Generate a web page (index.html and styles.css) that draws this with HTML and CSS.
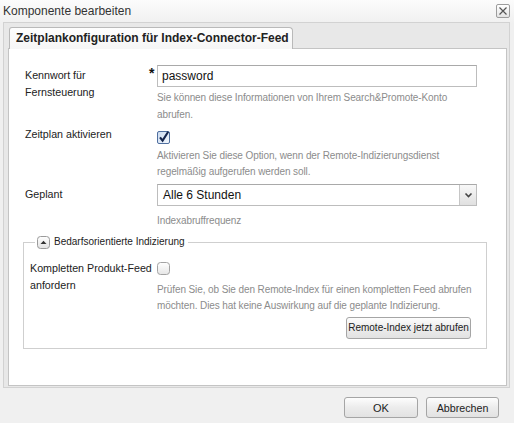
FILE: index.html
```html
<!DOCTYPE html>
<html lang="de">
<head>
<meta charset="utf-8">
<title>Komponente bearbeiten</title>
<link rel="stylesheet" href="styles.css">
</head>
<body>
<div class="dialog">
  <div class="titlebar">
    <span class="title">Komponente bearbeiten</span>
    <span class="close"><svg width="12" height="12" viewBox="0 0 12 12"><path d="M2.5 2.5 L9.5 9.5 M9.5 2.5 L2.5 9.5" stroke="#555" stroke-width="1.2" fill="none"/></svg></span>
  </div>
  <div class="panel">
    <div class="tabstrip"><div class="tab">Zeitplankonfiguration für Index-Connector-Feed</div></div>
    <div class="tabbody">
      <div class="row">
        <div class="label">Kennwort für<br>Fernsteuerung</div>
        <div class="req">*</div>
        <div class="control">
          <div class="input">password</div>
          <div class="help help-a"><span>Sie können diese Informationen von Ihrem Search&amp;Promote-Konto</span><span>abrufen.</span></div>
        </div>
      </div>
      <div class="row row-check">
        <div class="label">Zeitplan aktivieren</div>
        <div class="req"></div>
        <div class="control">
          <svg class="cb cb-on" width="13" height="13" viewBox="0 0 13 13"><defs><linearGradient id="cbg" x1="0" y1="0" x2="1" y2="1"><stop offset="0" stop-color="#c9daf0"/><stop offset="1" stop-color="#f4f8fd"/></linearGradient></defs><rect x="0.5" y="0.5" width="12" height="12" rx="1.5" fill="url(#cbg)" stroke="#4f6f9f"/><path d="M3 6.3 L5.6 9.6 L11.2 0.8" stroke="#14254d" stroke-width="2.1" fill="none"/></svg>
          <div class="help help-b"><span>Aktivieren Sie diese Option, wenn der Remote-Indizierungsdienst</span><span>regelmäßig aufgerufen werden soll.</span></div>
        </div>
      </div>
      <div class="row row-select">
        <div class="label">Geplant</div>
        <div class="req"></div>
        <div class="control">
          <div class="select"><span class="select-text">Alle 6 Stunden</span><span class="select-btn"><svg width="9" height="6" viewBox="0 0 9 6"><path d="M1.5 1.5 L4.5 4.5 L7.5 1.5" stroke="#444" stroke-width="1.6" fill="none"/></svg></span></div>
          <div class="help help-c"><span>Indexabruffrequenz</span></div>
        </div>
      </div>
      <fieldset class="group">
        <legend class="legend"><svg class="toggle" width="13" height="13" viewBox="0 0 13 13"><defs><linearGradient id="tg" x1="0" y1="0" x2="0" y2="1"><stop offset="0" stop-color="#ffffff"/><stop offset="1" stop-color="#e2e2e2"/></linearGradient></defs><rect x="0.5" y="0.5" width="12" height="12" rx="3" fill="url(#tg)" stroke="#9a9a9a"/><path d="M3.5 8 L6.5 4.8 L9.5 8 Z" fill="#333"/></svg><span>Bedarfsorientierte Indizierung</span></legend>
        <div class="row row-inner">
          <div class="label">Kompletten Produkt-Feed<br>anfordern</div>
          <div class="req"></div>
          <div class="control">
            <svg class="cb cb-off" width="13" height="13" viewBox="0 0 13 13"><defs><linearGradient id="cbo" x1="0" y1="0" x2="0" y2="1"><stop offset="0" stop-color="#ffffff"/><stop offset="1" stop-color="#e6e6e6"/></linearGradient></defs><rect x="0.5" y="0.5" width="12" height="12" rx="3" fill="url(#cbo)" stroke="#a3a3a3"/></svg>
            <div class="help help-d"><span>Prüfen Sie, ob Sie den Remote-Index für einen kompletten Feed abrufen</span><span>möchten. Dies hat keine Auswirkung auf die geplante Indizierung.</span></div>
            <div class="btn-row"><button class="btn btn-small">Remote-Index jetzt abrufen</button></div>
          </div>
        </div>
      </fieldset>
    </div>
  </div>
  <div class="footer">
    <button class="btn btn-ok">OK</button>
    <button class="btn btn-cancel">Abbrechen</button>
  </div>
</div>
</body>
</html>
```
FILE: styles.css
```css
* { box-sizing: border-box; }
html, body { margin: 0; padding: 0; }
body {
  width: 514px;
  height: 423px;
  overflow: hidden;
  background: #f0f0f0;
  font-family: "Liberation Sans", Arial, sans-serif;
  color: #222;
}
.dialog {
  width: 514px;
  height: 423px;
  display: flex;
  flex-direction: column;
  background: linear-gradient(#fcfcfc, #f0f0f0 24px, #f0f0f0);
}
.titlebar {
  height: 22px;
  display: flex;
  align-items: center;
  justify-content: space-between;
  padding: 0 4px 1px 3px;
}
.title { font-size: 12px; color: #333; line-height: 16px; }
.close {
  width: 14px;
  height: 14px;
  border: 1px solid #9c9c9c;
  border-radius: 2px;
  background: linear-gradient(#ffffff, #e4e4e4);
  display: flex;
  align-items: center;
  justify-content: center;
}
.panel {
  margin: 0 4px 0 3px;
  height: 366px;
  border: 1px solid #d2d2d2;
  background: #e8e8e8;
  padding: 4px 2px 1px 4px;
  display: flex;
  flex-direction: column;
}
.tabstrip { display: flex; padding-left: 1px; }
.tab {
  position: relative;
  z-index: 1;
  height: 22px;
  margin-bottom: -1px;
  padding: 0 6px;
  width: 284px;
  border: 1px solid #b9b9b9;
  border-bottom: none;
  border-radius: 3px 4px 0 0;
  background: linear-gradient(#fdfdfd, #f6f6f6);
  font-size: 12px;
  font-weight: bold;
  line-height: 20px;
  color: #222;
  white-space: nowrap;
}
.tabbody {
  flex: 1;
  background: #fff;
  border: 1px solid #c4c4c4;
  padding: 16px 0 0 14px;
}
.row {
  display: grid;
  grid-template-columns: 124px 8px 320px;
  padding-left: 2px;
}
.label {
  font-size: 10.7px;
  line-height: 17px;
  padding-top: 2px;
  color: #222;
  white-space: nowrap;
}
.req {
  font-size: 14px;
  font-weight: bold;
  line-height: 14px;
  margin-top: 1px;
  color: #111;
}
.control { display: flex; flex-direction: column; align-items: flex-start; }
.input {
  width: 320px;
  height: 22px;
  border: 1px solid #bdbdbd;
  border-top-color: #a9a9a9;
  padding-left: 4px;
  font-size: 12px;
  line-height: 20px;
  color: #111;
  background: #fff;
}
.help {
  font-size: 10px;
  letter-spacing: -0.1px;
  color: #8c8c8c;
  display: flex;
  flex-direction: column;
  white-space: nowrap;
}
.help-a { margin-top: 2px; line-height: 17px; }
.row-check { margin-top: 1px; }
.cb { display: block; }
.cb-on { margin-top: 7px; }
.help-b { margin-top: 4px; line-height: 16px; }
.row-select { margin-top: 4px; }
.select {
  width: 320px;
  height: 22px;
  border: 1px solid #bdbdbd;
  border-top-color: #a9a9a9;
  display: flex;
  background: #fff;
}
.select-text {
  flex: 1;
  padding-left: 5px;
  font-size: 12px;
  line-height: 20px;
  color: #111;
}
.select-btn {
  width: 17px;
  border-left: 1px solid #c6c6c6;
  background: linear-gradient(#f8f8f8, #e0e0e0);
  display: flex;
  align-items: center;
  justify-content: center;
}
.help-c { margin-top: 7px; line-height: 16px; }
.group {
  margin: 6px 0 0 0;
  width: 464px;
  border: 1px solid #cfcfcf;
  padding: 9px 0 9px 6px;
}
.legend {
  margin-left: 5px;
  padding: 0 3px 0 2px;
  display: flex;
  align-items: center;
  gap: 4px;
  font-size: 10px;
  line-height: 14px;
  color: #222;
}
.toggle { display: block; }
.row-inner {
  grid-template-columns: 119px 8px 320px;
  padding-left: 0;
}
.cb-off { margin-top: 4px; }
.help-d { margin-top: 7px; line-height: 16px; }
.btn-row { width: 314px; display: flex; justify-content: flex-end; margin-top: 3px; }
.btn {
  font-family: "Liberation Sans", Arial, sans-serif;
  border: 1px solid #a5a5a5;
  border-radius: 3px;
  background: linear-gradient(#fdfdfd, #ececec 50%, #e2e2e2);
  color: #222;
  padding: 0;
  margin: 0;
}
.btn-small { width: 125px; height: 22px; font-size: 10px; line-height: 20px; }
.footer {
  display: flex;
  justify-content: flex-end;
  gap: 8px;
  padding: 9px 15px 0 0;
}
.btn-ok { width: 74px; height: 21px; font-size: 11px; }
.btn-cancel { width: 73px; height: 21px; font-size: 10.7px; }
```
